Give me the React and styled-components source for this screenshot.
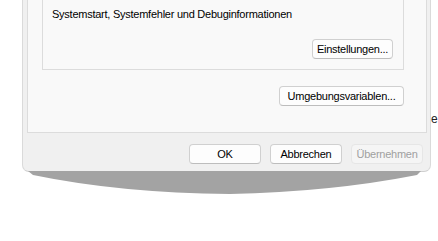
import React from "react";
import styled, { createGlobalStyle } from "styled-components";

const GlobalStyle = createGlobalStyle`
	html, body {
		margin: 0;
		padding: 0;
		background: #ffffff;
		font-family: "Liberation Sans", "DejaVu Sans", sans-serif;
		font-size: 11px;
		letter-spacing: -0.25px;
		color: #000000;
	}
`;

function Button({ children, width, disabled }) {
	return (
		<Btn $width={width} disabled={disabled}>
			{children}
		</Btn>
	);
}

export default function App() {
	return (
		<>
			<GlobalStyle />
			<Page>
				<Stack>
					<Window>
						<TabPage>
							<GroupBox>
								<GroupText>Systemstart, Systemfehler und Debuginformationen</GroupText>
								<GroupActions>
									<Button width={81}>Einstellungen...</Button>
								</GroupActions>
							</GroupBox>
							<EnvRow>
								<Button width={125}>Umgebungsvariablen...</Button>
							</EnvRow>
						</TabPage>
						<Footer>
							<Button width={72}>OK</Button>
							<Button width={72}>Abbrechen</Button>
							<Button width={72} disabled>
								Übernehmen
							</Button>
						</Footer>
					</Window>
					<Shadow viewBox="0 0 438 26" width="438" height="26">
						<path d="M28 0 L421 0 L417 4 Q330 21 230 23 Q120 22 33 4 Z" fill="#a3a3a3" />
					</Shadow>
				</Stack>
				<Behind>e</Behind>
			</Page>
		</>
	);
}

const Page = styled.div`
	display: flex;
	align-items: flex-start;
	width: 438px;
	height: 241px;
	overflow: hidden;
`;

const Stack = styled.div`
	display: flex;
	flex-direction: column;
	width: 431px;
`;

const Window = styled.div`
	margin-left: 22px;
	width: 409px;
	height: 172px;
	box-sizing: border-box;
	background: #f0f0f0;
	border-left: 1px solid #dadada;
	border-right: 1px solid #dadada;
	border-bottom: 1px solid #cfcfcf;
	border-radius: 0 0 7px 7px;
	display: flex;
	flex-direction: column;
`;

const TabPage = styled.div`
	margin-left: 4px;
	width: 400px;
	height: 133px;
	box-sizing: border-box;
	background: #f9f9f9;
	border-left: 1px solid #dcdcdc;
	border-right: 1px solid #dcdcdc;
	border-bottom: 1px solid #dcdcdc;
	padding-left: 14px;
	display: flex;
	flex-direction: column;
`;

const GroupBox = styled.div`
	width: 362px;
	height: 70px;
	box-sizing: border-box;
	border-left: 1px solid #dcdcdc;
	border-right: 1px solid #dcdcdc;
	border-bottom: 1px solid #dcdcdc;
	padding: 6px 10px 10px 9px;
	display: flex;
	flex-direction: column;
	justify-content: space-between;
`;

const GroupText = styled.div`
	line-height: 16px;
	white-space: nowrap;
`;

const GroupActions = styled.div`
	display: flex;
	justify-content: flex-end;
`;

const EnvRow = styled.div`
	width: 362px;
	margin-top: 16px;
	display: flex;
	justify-content: flex-end;
`;

const Footer = styled.div`
	display: flex;
	justify-content: flex-end;
	gap: 9px;
	padding: 11px 7px 0 0;
`;

const Btn = styled.button`
	width: ${(p) => p.$width}px;
	height: 20px;
	box-sizing: border-box;
	padding: 0;
	font-family: inherit;
	font-size: 11px;
	letter-spacing: -0.25px;
	line-height: 18px;
	color: ${(p) => (p.disabled ? "#a0a0a0" : "#000000")};
	background: ${(p) => (p.disabled ? "#f5f5f5" : "#fdfdfd")};
	border: 1px solid ${(p) => (p.disabled ? "#e6e6e6" : "#d0d0d0")};
	border-bottom-color: ${(p) => (p.disabled ? "#e6e6e6" : "#bdbdbd")};
	border-radius: 4px;
	text-align: center;
	white-space: nowrap;
`;

const Shadow = styled.svg`
	display: block;
	margin-top: -1px;
`;

const Behind = styled.div`
	margin-top: 112px;
	width: 7px;
	overflow: hidden;
	font-size: 12px;
	line-height: 14px;
	color: #222222;
`;
